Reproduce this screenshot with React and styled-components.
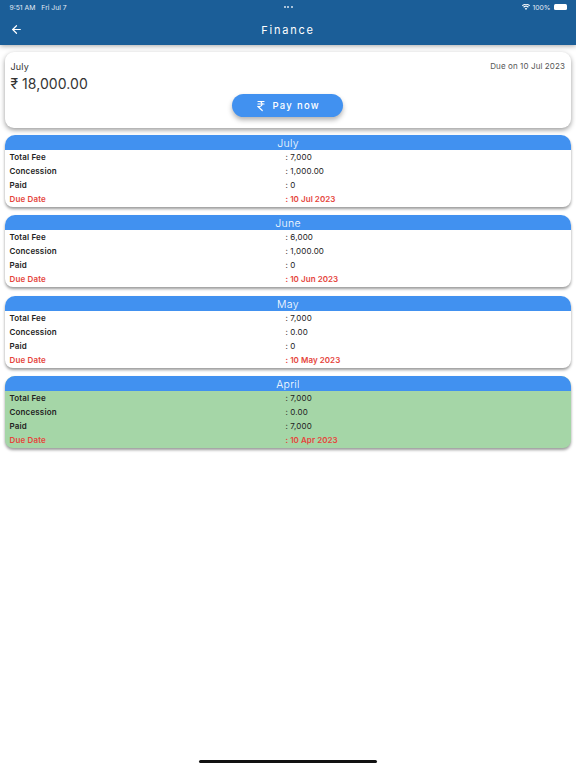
import React from "react";
import styled, { createGlobalStyle } from "styled-components";
import { ArrowLeft, IndianRupee } from "lucide-react";

const GlobalStyle = createGlobalStyle`
  html, body {
    margin: 0;
    padding: 0;
    background: #fff;
  }
  * {
    box-sizing: border-box;
  }
  body {
    font-family: Inter, "Noto Sans", "Liberation Sans", sans-serif;
  }
`;

const months = [
  { name: "July", fee: "7,000", concession: "1,000.00", paid: "0", due: "10 Jul 2023" },
  { name: "June", fee: "6,000", concession: "1,000.00", paid: "0", due: "10 Jun 2023" },
  { name: "May", fee: "7,000", concession: "0.00", paid: "0", due: "10 May 2023" },
  { name: "April", fee: "7,000", concession: "0.00", paid: "7,000", due: "10 Apr 2023", settled: true },
];

function MonthCard({ month }) {
  return (
    <Month $settled={month.settled}>
      <MonthTitle>{month.name}</MonthTitle>
      <Rows>
        <Row>
          <Label>Total Fee</Label>
          <Value>: {month.fee}</Value>
        </Row>
        <Row>
          <Label>Concession</Label>
          <Value>: {month.concession}</Value>
        </Row>
        <Row>
          <Label>Paid</Label>
          <Value>: {month.paid}</Value>
        </Row>
        <Row $due>
          <Label>Due Date</Label>
          <Value>: {month.due}</Value>
        </Row>
      </Rows>
    </Month>
  );
}

function App() {
  return (
    <Page>
      <GlobalStyle />
      <Header>
        <StatusBar>
          <StatusLeft>
            <span>9:51 AM</span>
            <span>Fri Jul 7</span>
          </StatusLeft>
          <Dots>
            <i />
            <i />
            <i />
          </Dots>
          <StatusRight>
            <svg width="8" height="6" viewBox="0 0 20 15" fill="#fff">
              <path d="M10 15 6.8 11.3a4.6 4.6 0 0 1 6.4 0zM4.9 9.2 3 7a10.2 10.2 0 0 1 14 0l-1.9 2.2a7.4 7.4 0 0 0-10.2 0zM1.6 5.4 0 3.4a14.8 14.8 0 0 1 20 0l-1.6 2a12.2 12.2 0 0 0-16.8 0z" />
            </svg>
            <span>100%</span>
            <Battery />
          </StatusRight>
        </StatusBar>
        <TopBar>
          <BackButton>
            <ArrowLeft size={13} strokeWidth={2.2} color="#fff" />
          </BackButton>
          <Title>Finance</Title>
        </TopBar>
      </Header>
      <Content>
        <Summary>
          <SummaryTop>
            <SummaryMonth>July</SummaryMonth>
            <DueOn>Due on 10 Jul 2023</DueOn>
          </SummaryTop>
          <Amount>₹ 18,000.00</Amount>
          <PayButton>
            <IndianRupee size={12} strokeWidth={2.4} />
            <span>Pay now</span>
          </PayButton>
        </Summary>
        <MonthList>
          {months.map((m) => (
            <MonthCard key={m.name} month={m} />
          ))}
        </MonthList>
      </Content>
      <HomeBar />
    </Page>
  );
}

export default App;

const Page = styled.div`
  position: relative;
  width: 576px;
  height: 768px;
  overflow: hidden;
  background: #fff;
`;

const Header = styled.header`
  position: relative;
  height: 45px;
  background: #1b5e98;
  color: #fff;
  box-shadow: 0 1px 5px rgba(0, 0, 0, 0.35);
`;

const StatusBar = styled.div`
  height: 14px;
  padding: 0 9.5px;
  display: grid;
  grid-template-columns: 1fr auto 1fr;
  align-items: center;
  font-size: 6.8px;
  color: #e4edf5;
`;

const StatusLeft = styled.div`
  display: flex;
  gap: 6px;
`;

const Dots = styled.div`
  display: flex;
  gap: 1.5px;

  i {
    width: 2px;
    height: 2px;
    border-radius: 50%;
    background: #dbe6f0;
  }
`;

const StatusRight = styled.div`
  display: flex;
  justify-content: flex-end;
  align-items: center;
  gap: 2px;
`;

const Battery = styled.div`
  width: 13px;
  height: 6px;
  margin-left: 1px;
  border-radius: 1.5px;
  background: #fff;
`;

const TopBar = styled.div`
  position: relative;
  height: 31px;
  display: flex;
  align-items: center;
  justify-content: center;
`;

const BackButton = styled.div`
  position: absolute;
  left: 10px;
  top: 9px;
  display: flex;
`;

const Title = styled.h1`
  margin: 0;
  font-size: 11px;
  font-weight: 400;
  letter-spacing: 1.75px;
`;

const Content = styled.main`
  padding: 7px 5px 0;
`;

const Summary = styled.section`
  height: 76px;
  padding: 9px 6px 0 5.5px;
  background: #fff;
  border-radius: 9px;
  box-shadow: 0 2px 5px rgba(0, 0, 0, 0.4);
  display: flex;
  flex-direction: column;
`;

const SummaryTop = styled.div`
  display: flex;
  justify-content: space-between;
  align-items: center;
  height: 10px;
`;

const SummaryMonth = styled.span`
  font-size: 9px;
  letter-spacing: 0.2px;
  color: #333;
`;

const DueOn = styled.span`
  font-size: 8px;
  letter-spacing: 0.1px;
  color: #555;
`;

const Amount = styled.div`
  margin-top: 4px;
  height: 17px;
  line-height: 17px;
  font-size: 14px;
  letter-spacing: 0.05px;
  color: #333;
`;

const PayButton = styled.button`
  align-self: center;
  margin-top: 2px;
  width: 111px;
  height: 23px;
  border: 0;
  padding: 0;
  border-radius: 12px;
  background: #4191f0;
  color: #fff;
  font-family: inherit;
  font-size: 9.5px;
  font-weight: 500;
  letter-spacing: 1.3px;
  display: flex;
  align-items: center;
  justify-content: center;
  gap: 5px;
  box-shadow: 0 3px 5px rgba(0, 0, 0, 0.3);
`;

const MonthList = styled.div`
  margin-top: 7px;
  display: flex;
  flex-direction: column;
  gap: 8.3px;
`;

const Month = styled.section`
  height: 72px;
  border-radius: 10px 10px 8px 8px;
  overflow: hidden;
  background: ${(p) => (p.$settled ? "#a5d6a7" : "#fff")};
  box-shadow: 0 2px 3px rgba(0, 0, 0, 0.4);
`;

const MonthTitle = styled.h2`
  margin: 0;
  height: 15px;
  line-height: 17px;
  background: #4191f0;
  color: #fff;
  font-size: 10.5px;
  font-weight: 300;
  letter-spacing: 0.3px;
  text-align: center;
`;

const Rows = styled.div`
  padding-left: 4.5px;
`;

const Row = styled.div`
  display: grid;
  grid-template-columns: 276px 1fr;
  height: 14px;
  align-items: center;
  font-size: 8px;
  letter-spacing: ${(p) => (p.$due ? "0.05px" : "0.15px")};
  color: ${(p) => (p.$due ? "#e5453c" : "#222")};
  font-weight: ${(p) => (p.$due ? 600 : 400)};
`;

const Label = styled.span`
  font-weight: 600;
  letter-spacing: 0.15px;
`;

const Value = styled.span`
  white-space: nowrap;
`;

const HomeBar = styled.div`
  position: absolute;
  left: 199px;
  bottom: 5px;
  width: 178px;
  height: 3px;
  border-radius: 2px;
  background: #111;
`;
